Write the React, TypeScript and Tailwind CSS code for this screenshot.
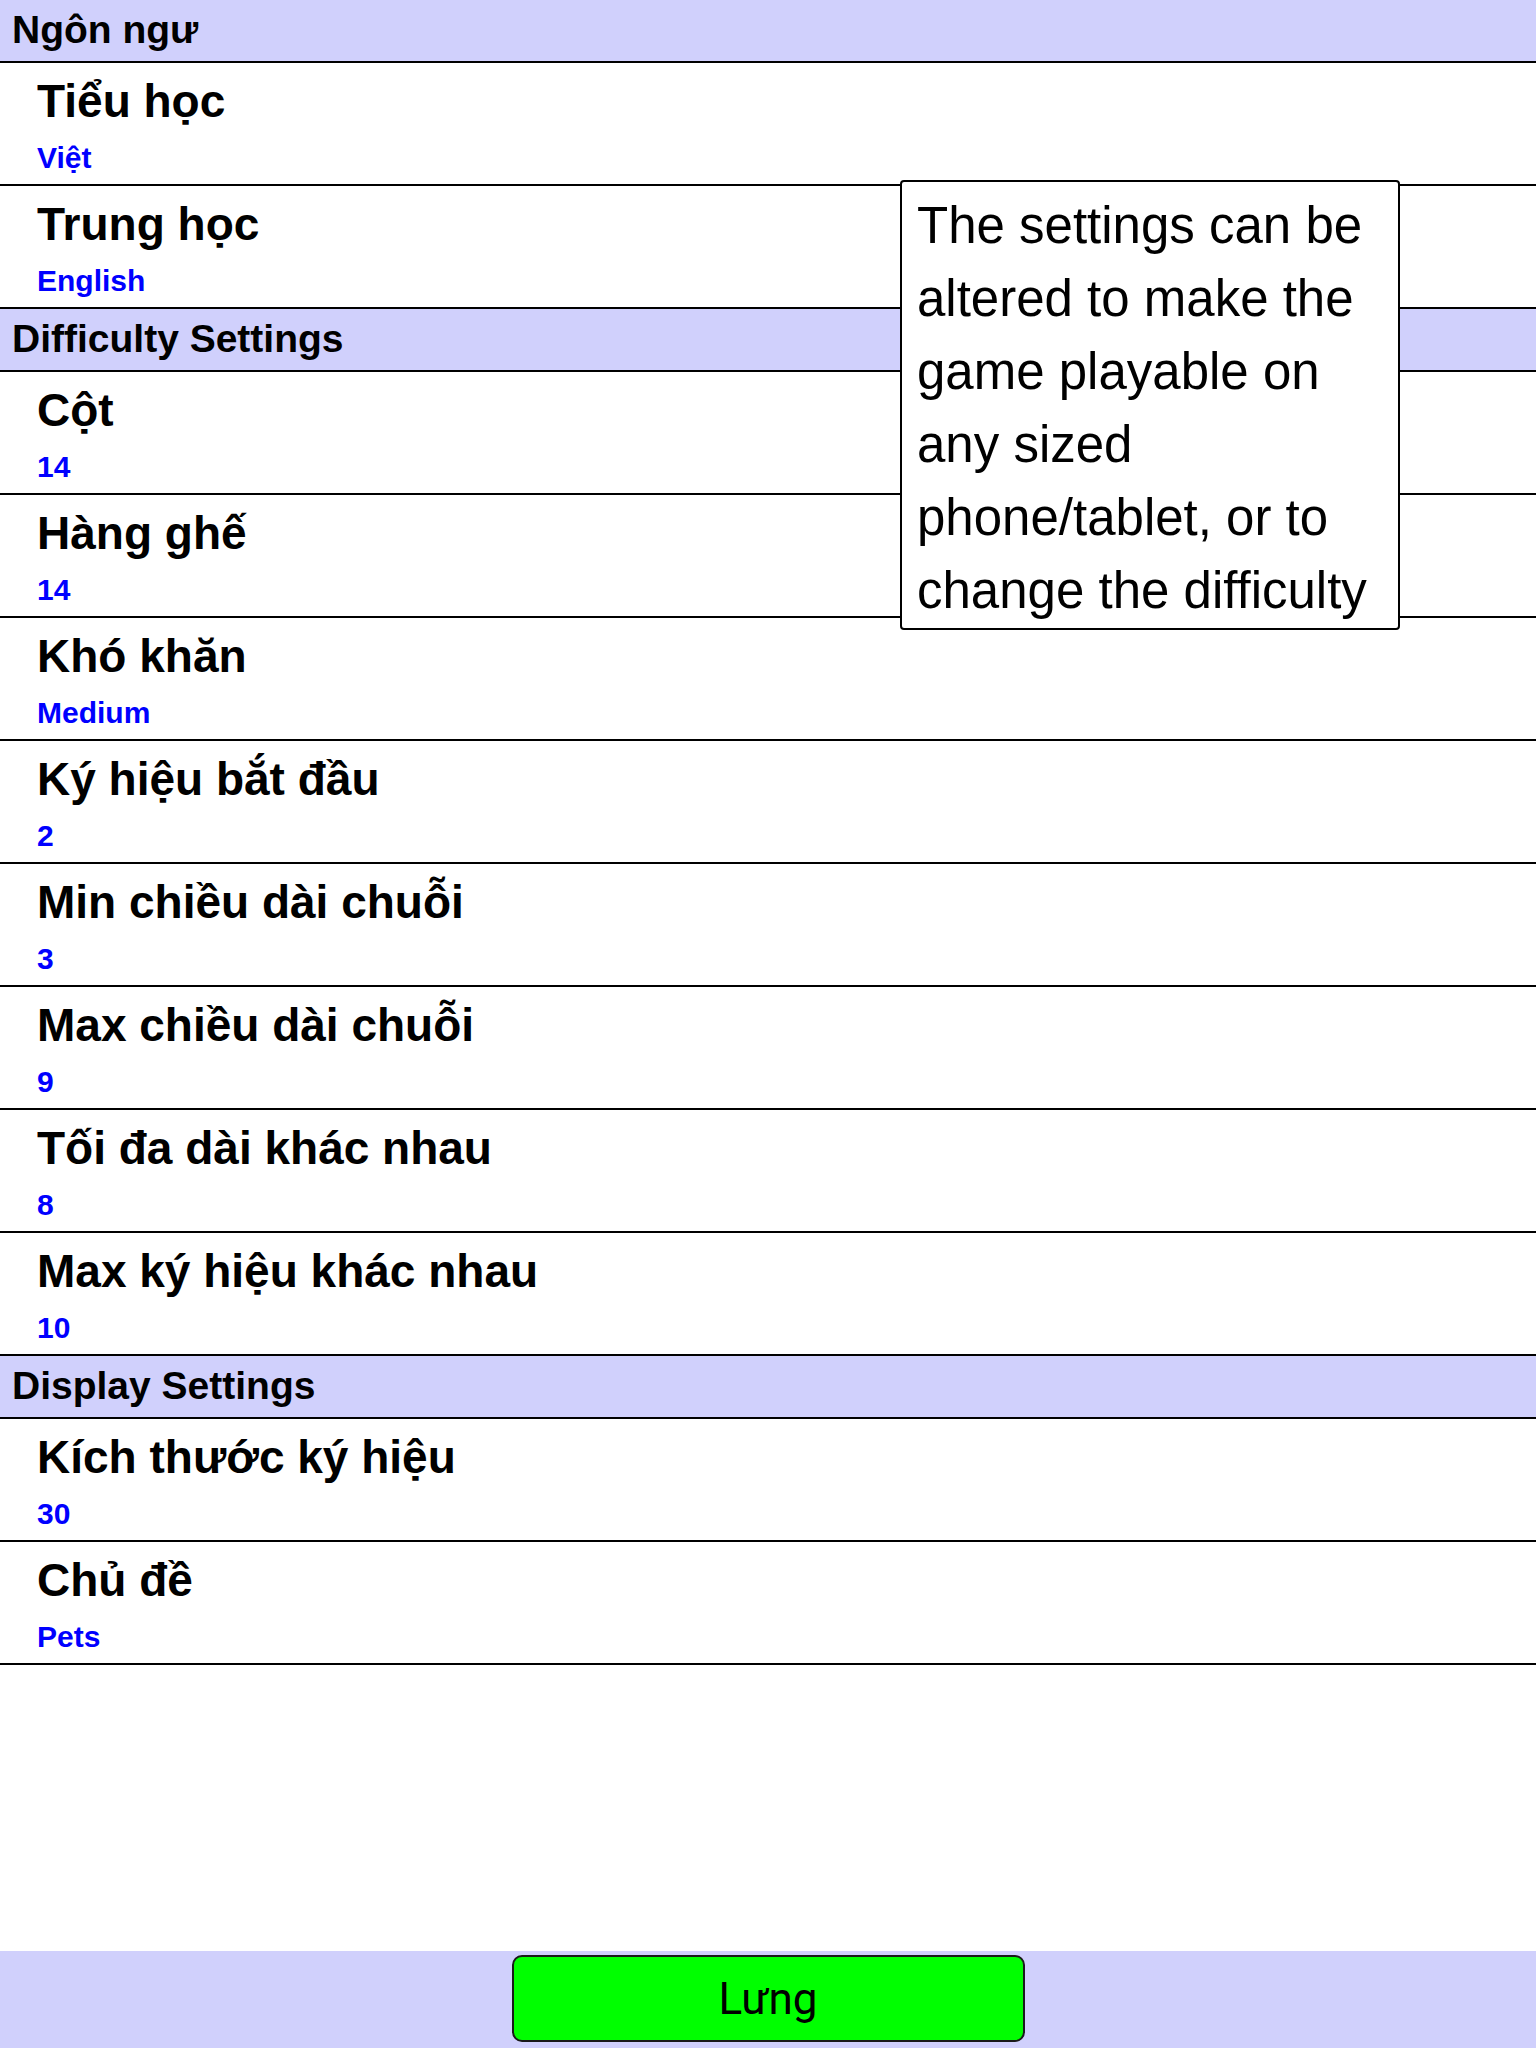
const groups = [
  {
    title: "Ngôn ngư",
    items: [
      { label: "Tiểu học", value: "Việt" },
      { label: "Trung học", value: "English" },
    ],
  },
  {
    title: "Difficulty Settings",
    items: [
      { label: "Cột", value: "14" },
      { label: "Hàng ghế", value: "14" },
      { label: "Khó khăn", value: "Medium" },
      { label: "Ký hiệu bắt đầu", value: "2" },
      { label: "Min chiều dài chuỗi", value: "3" },
      { label: "Max chiều dài chuỗi", value: "9" },
      { label: "Tối đa dài khác nhau", value: "8" },
      { label: "Max ký hiệu khác nhau", value: "10" },
    ],
  },
  {
    title: "Display Settings",
    items: [
      { label: "Kích thước ký hiệu", value: "30" },
      { label: "Chủ đề", value: "Pets" },
    ],
  },
];

const hintLines = [
  "The settings can be",
  "altered to make the",
  "game playable on",
  "any sized",
  "phone/tablet, or to",
  "change the difficulty",
];

function SettingRow({ label, value }: { label: string; value: string }) {
  return (
    <div className="h-[123px] border-b-2 border-black pl-[37px] pt-[12px]">
      <div className="text-[46px] font-bold leading-[52px] text-black">{label}</div>
      <div className="mt-[15px] text-[30px] font-bold leading-[32px] text-[#0000ff]">{value}</div>
    </div>
  );
}

export default function App() {
  return (
    <div className="relative flex h-[2048px] w-[1536px] flex-col bg-white font-['Liberation_Sans',Arial,sans-serif]">
      <div className="flex-1">
        {groups.map((g) => (
          <section key={g.title}>
            <div className="h-[63px] border-b-2 border-black bg-[#d0d0fc] pl-[12px] pt-[2px] text-[39px] font-bold leading-[56px] text-black">
              {g.title}
            </div>
            {g.items.map((it) => (
              <SettingRow key={it.label} label={it.label} value={it.value} />
            ))}
          </section>
        ))}
      </div>

      <div className="flex h-[97px] items-start justify-center bg-[#d0d0fc] pt-[4px]">
        <button className="h-[87px] w-[513px] rounded-[10px] border-2 border-[#1a1a1a] bg-[#00ff00] font-['Roboto',sans-serif] text-[44px] text-black">
          Lưng
        </button>
      </div>

      <div className="absolute left-[900px] top-[180px] h-[450px] w-[500px] rounded-[4px] border-2 border-black bg-white pl-[15px] pt-[7px] text-[51px] leading-[73px] text-black">
        {hintLines.map((l) => (
          <div key={l} className="whitespace-nowrap">
            {l}
          </div>
        ))}
      </div>
    </div>
  );
}
